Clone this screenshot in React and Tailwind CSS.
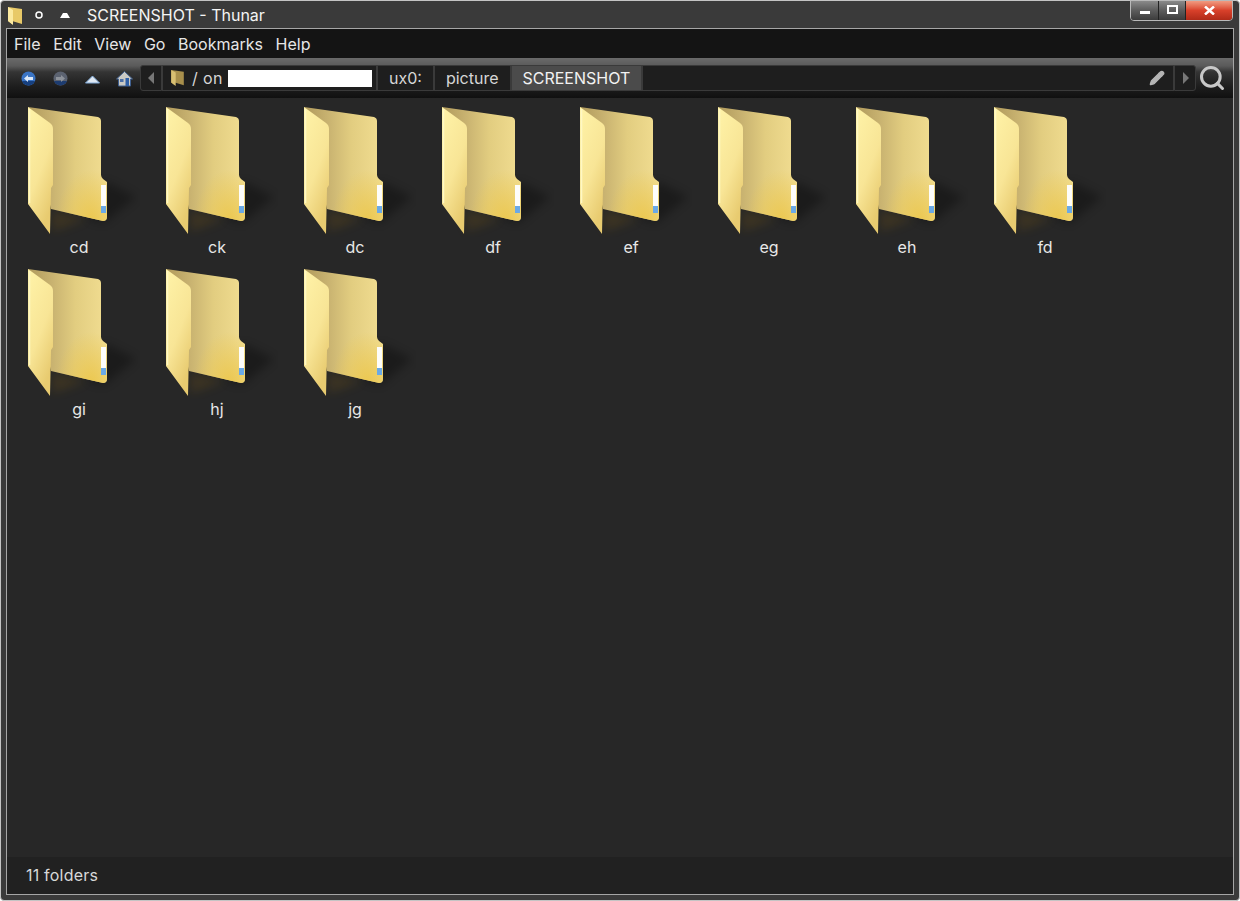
import { Pencil, Search } from 'lucide-react';

const FOLDERS = ['cd', 'ck', 'dc', 'df', 'ef', 'eg', 'eh', 'fd', 'gi', 'hj', 'jg'];
const MENUS = ['File', 'Edit', 'View', 'Go', 'Bookmarks', 'Help'];

function FolderIcon({ id }) {
  return (
    <svg width="112" height="130" viewBox="0 0 112 130" className="block">
      <defs>
        <linearGradient id={`back-${id}`} x1="0" y1="0" x2="1" y2="0">
          <stop offset="0" stopColor="#b09a5c" />
          <stop offset="0.3" stopColor="#c8b270" />
          <stop offset="0.6" stopColor="#e2cd80" />
          <stop offset="1" stopColor="#f2de92" />
        </linearGradient>
        <radialGradient id={`glow-${id}`} cx="0.8" cy="1" r="0.45">
          <stop offset="0" stopColor="#ecc850" />
          <stop offset="1" stopColor="#ecc850" stopOpacity="0" />
        </radialGradient>
        <linearGradient id={`front-${id}`} x1="0" y1="0" x2="0.5" y2="1">
          <stop offset="0" stopColor="#fff3a8" />
          <stop offset="0.6" stopColor="#f8e596" />
          <stop offset="1" stopColor="#e8cb70" />
        </linearGradient>
        <filter id={`blur-${id}`} x="-30%" y="-30%" width="160%" height="160%">
          <feGaussianBlur stdDeviation="5" />
        </filter>
      </defs>
      <path d="M76 74 L108 90 L76 116 L60 112 Z" fill="#000" opacity="0.3" filter={`url(#blur-${id})`} />
      <path d="M24 103 L58 112 L32 122 L24 124 Z" fill="#6b4f18" opacity="0.3" filter={`url(#blur-${id})`} />
      <path d="M0 0 L70 10 Q73 11 73 14 L73 68 Q73 70 75 72 L79 75 L79 110 Q79 114 75 114 L23 102 Z" fill={`url(#back-${id})`} />
      <path d="M0 0 L70 10 Q73 11 73 14 L73 68 Q73 70 75 72 L79 75 L79 110 Q79 114 75 114 L23 102 Z" fill={`url(#glow-${id})`} />
      <path d="M0 0 L22 16 Q25 18 25 22 L25 78 L23 81 L22 127 L0 97 Z" fill={`url(#front-${id})`} />
      <path d="M1.5 2 L1.5 96" stroke="#fff8c4" strokeWidth="1.5" fill="none" />
      <rect x="73" y="78" width="5" height="28" fill="#fdfdfb" />
      <rect x="73" y="99" width="5" height="7" fill="#6aa9e6" />
    </svg>
  );
}

function FolderItem({ name, id }) {
  return (
    <div className="flex flex-col items-center w-[138px] h-[162px] pt-[9px]">
      <div className="w-[112px] h-[130px] ml-[10px]">
        <FolderIcon id={id} />
      </div>
      <span className="leading-[20px] text-[#e8e8e8]">{name}</span>
    </div>
  );
}

function NavIcons() {
  return (
    <div className="flex items-center gap-[13px] pl-[12px] w-[133px]">
      <svg width="19" height="19" viewBox="0 0 19 19">
        <circle cx="9.5" cy="9.5" r="7" fill="#3a74c4" />
        <path d="M3 12 A7 7 0 0 0 16 12 Z" fill="#17407f" />
        <path d="M5 9.5 L9 6 V8 H14 V11 H9 V13 Z" fill="#dbe8f7" />
      </svg>
      <svg width="19" height="19" viewBox="0 0 19 19">
        <circle cx="9.5" cy="9.5" r="7" fill="#5b6270" />
        <path d="M3 12 A7 7 0 0 0 16 12 Z" fill="#1d3c70" />
        <path d="M14 9.5 L10 6 V8 H5 V11 H10 V13 Z" fill="#8d929a" />
      </svg>
      <svg width="19" height="19" viewBox="0 0 19 19">
        <path d="M2.5 14 L9.5 7 L16.5 14 Z" fill="#dfe8f2" stroke="#7fa9d8" strokeWidth="1" />
      </svg>
      <svg width="19" height="19" viewBox="0 0 19 19">
        <path d="M1.5 10 L9.5 2.5 L17.5 10 L15.5 10 V17 H3.5 V10 Z" fill="#c9c9c4" stroke="#3f5f8f" strokeWidth="1" />
        <rect x="10.5" y="9" width="3.5" height="8" fill="#2e5fa6" />
        <rect x="5" y="10" width="3.5" height="3" fill="#4a6ea6" />
      </svg>
    </div>
  );
}

function Crumb({ children, active }) {
  return (
    <div className={`h-[26px] flex items-center px-[11px] border border-[#3a3a3a] ${active ? 'bg-[#4b4b4b] text-[#f2f2f2]' : 'bg-[#1e1e1e] text-[#d6d6d6]'}`}>
      {children}
    </div>
  );
}

export default function App() {
  return (
    <div className="w-[1240px] h-[901px] bg-white overflow-hidden text-[16px]" style={{ fontFamily: 'Inter, sans-serif' }}>
      <div className="w-full h-full flex flex-col bg-[#3a3a3a] border border-[#c4c4c4] rounded-[4px]">
        {/* titlebar */}
        <div className="h-[27px] shrink-0 flex items-start relative">
          <svg width="16" height="20" viewBox="0 0 16 20" className="ml-[6px] mt-[5px]">
            <path d="M1 1 L15 3 V18 L5 15 L5 18 L1 15 Z" fill="#e8c968" />
            <path d="M1 1 L6 4 V19 L1 15 Z" fill="#fbe9a0" />
          </svg>
          <svg width="8" height="8" viewBox="0 0 8 8" className="ml-[12px] mt-[10px]">
            <circle cx="4" cy="4" r="3" fill="none" stroke="#fff" strokeWidth="1.5" />
          </svg>
          <svg width="10" height="6" viewBox="0 0 10 6" className="ml-[17px] mt-[11px]">
            <path d="M0 6 L3 1 H7 L10 6 Z" fill="#fff" />
          </svg>
          <span className="ml-[17px] mt-[3px] leading-[22px] text-[#f4f4f4]">SCREENSHOT - Thunar</span>
          <div className="absolute right-[6px] top-[-1px] w-[103px] h-[21px] flex border border-[#b9b9b9] rounded-b-[4px] overflow-hidden">
            <div className="w-[28px] flex items-center justify-center border-r border-[#222] bg-gradient-to-b from-[#8a8a8a] via-[#5c5c5c] to-[#3c3c3c]">
              <div className="w-[10px] h-[3px] bg-white mt-[3px]" />
            </div>
            <div className="w-[27px] flex items-center justify-center border-r border-[#222] bg-gradient-to-b from-[#8a8a8a] via-[#5c5c5c] to-[#3c3c3c]">
              <div className="w-[11px] h-[9px] border-2 border-white mb-[2px]" />
            </div>
            <div className="flex-1 flex items-center justify-center bg-gradient-to-b from-[#f09a80] via-[#d8402a] to-[#b02a18]">
              <svg width="11" height="9" viewBox="0 0 11 9"><path d="M1 0.5 L10 8.5 M10 0.5 L1 8.5" stroke="#fff" strokeWidth="2.5" /></svg>
            </div>
          </div>
        </div>

        {/* inner frame */}
        <div className="flex-1 min-h-0 mx-[5px] mb-[5px] border border-[#a6a6a6] flex flex-col">
          <div className="h-[29px] shrink-0 bg-[#141414] flex items-center gap-[12.6px] pl-[7px] text-[#e6e6e6]">
            {MENUS.map((m) => (
              <span key={m}>{m}</span>
            ))}
          </div>

          <div className="h-[40px] shrink-0 flex items-center bg-[linear-gradient(#6a6a6a_0,#5a5a5a_20%,#343434_35%,#1e1e1e_70%,#101010_100%)]">
            <NavIcons />
            <div className="h-[26px] w-[22px] border border-[#3a3a3a] bg-[#1e1e1e] rounded-l-[3px] flex items-center justify-center">
              <svg width="7" height="12" viewBox="0 0 7 12"><path d="M6 0 L0 6 L6 12 Z" fill="#777" /></svg>
            </div>
            <div className="w-[215px] h-[26px] flex items-center pl-[7px] border border-[#3a3a3a] bg-[#1e1e1e] text-[#d6d6d6]">
              <svg width="15" height="18" viewBox="0 0 16 20" className="mr-[7px]">
                <path d="M1 1 L15 3 V18 L5 15 L5 18 L1 15 Z" fill="#a88f4c" />
                <path d="M1 1 L6 4 V19 L1 15 Z" fill="#d8bf72" />
              </svg>
              <span className="tracking-[0.4px]">/ on</span>
              <div className="w-[144px] h-[17px] ml-[5px] bg-white" />
            </div>
            <Crumb>ux0:</Crumb>
            <Crumb>picture</Crumb>
            <Crumb active>SCREENSHOT</Crumb>
            <div className="h-[26px] flex-1 border border-[#3a3a3a] bg-[#1e1e1e] flex items-center justify-end pr-[8px]">
              <Pencil size={16} className="text-[#b5b5b5]" fill="#b5b5b5" />
            </div>
            <div className="h-[26px] w-[22px] border border-[#3a3a3a] bg-[#1e1e1e] rounded-r-[3px] flex items-center justify-center">
              <svg width="7" height="12" viewBox="0 0 7 12"><path d="M1 0 L7 6 L1 12 Z" fill="#777" /></svg>
            </div>
            <div className="w-[37px] pl-[2px] flex items-center">
              <Search size={28} strokeWidth={2.6} className="text-[#c8c8c8]" />
            </div>
          </div>

          <div className="flex-1 min-h-0 bg-[#272727]">
            <div className="flex flex-wrap pl-[3px] w-[1110px]">
              {FOLDERS.map((f) => (
                <FolderItem key={f} name={f} id={f} />
              ))}
            </div>
          </div>

          <div className="h-[37px] shrink-0 bg-[#212121] flex items-center pl-[19px] pb-[2px] text-[#d8d8d8] tracking-[0.2px]">11 folders</div>
        </div>
      </div>
    </div>
  );
}
